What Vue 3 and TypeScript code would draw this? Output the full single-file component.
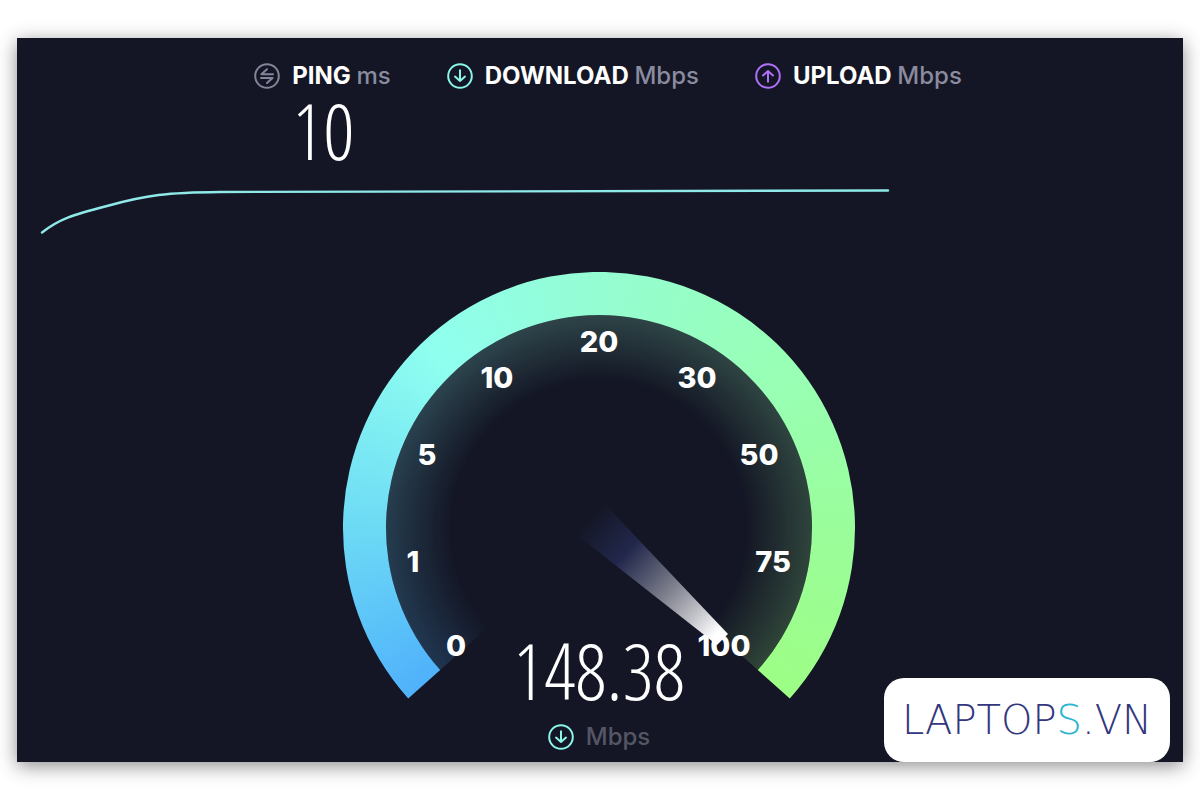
<script setup lang="ts">
interface Metric {
  id: 'ping' | 'download' | 'upload'
  label: string
  unit: string
  value: string
}

interface Tick {
  label: string
  x: number
  y: number
}

const metrics: Metric[] = [
  { id: 'ping', label: 'PING', unit: 'ms', value: '10' },
  { id: 'download', label: 'DOWNLOAD', unit: 'Mbps', value: '' },
  { id: 'upload', label: 'UPLOAD', unit: 'Mbps', value: '' },
]

const ticks: Tick[] = [
  { label: '0', x: 113, y: 384 },
  { label: '1', x: 70, y: 300 },
  { label: '5', x: 84, y: 193 },
  { label: '10', x: 154, y: 116 },
  { label: '20', x: 256, y: 80 },
  { label: '30', x: 354, y: 116 },
  { label: '50', x: 416, y: 193 },
  { label: '75', x: 430, y: 300 },
  { label: '100', x: 381, y: 384 },
]
</script>

<template>
  <main class="panel">
    <header class="metrics">
      <section v-for="m in metrics" :key="m.id" class="metric" :class="m.id">
        <svg class="icon" viewBox="0 0 26 26" aria-hidden="true">
          <circle cx="13" cy="13" r="11.8" />
          <path v-if="m.id === 'ping'" d="M19 11.3H7.4L13 6.2M7 14.9H18.6L13 20" />
          <path v-else-if="m.id === 'download'" d="M13 7.2V18M8 13.6L13 18L18 13.6" />
          <path v-else d="M13 18.8V8M8 12.4L13 8L18 12.4" />
        </svg>
        <h2 class="label">{{ m.label }} <span class="unit">{{ m.unit }}</span></h2>
        <p v-if="m.value" class="value">{{ m.value }}</p>
      </section>
    </header>

    <svg class="graph" viewBox="0 0 1166 80" aria-hidden="true">
      <path d="M25 62.5C42 49 55 45 90 36C130 25 150 22.5 203 22C380 21 600 21.5 871 20.5" />
    </svg>

    <section class="gauge">
      <svg class="dial" viewBox="0 0 512 490" role="img" aria-label="Download speed gauge">
        <defs>
          <clipPath id="band">
            <path d="M65.2 426.6A256 256 0 1 1 446.8 426.6L414.8 398A213 213 0 1 0 97.2 398Z" />
          </clipPath>
          <clipPath id="sector">
            <path d="M97.2 398A213 213 0 1 1 414.8 398L256 256Z" />
          </clipPath>
          <linearGradient id="beam" gradientUnits="userSpaceOnUse" x1="246" y1="246" x2="380" y2="368">
            <stop offset="0" stop-color="#252c55" stop-opacity="0" />
            <stop offset="0.28" stop-color="#252c55" stop-opacity="0.8" />
            <stop offset="0.58" stop-color="#8a8c99" stop-opacity="0.85" />
            <stop offset="0.95" stop-color="#ffffff" />
          </linearGradient>
        </defs>
        <g clip-path="url(#sector)">
          <foreignObject width="512" height="512"><div class="sweep glow"></div></foreignObject>
        </g>
        <g clip-path="url(#band)">
          <foreignObject width="512" height="512"><div class="sweep"></div></foreignObject>
        </g>
        <text v-for="t in ticks" :key="t.label" class="tick" :x="t.x" :y="t.y">{{ t.label }}</text>
        <path fill="url(#beam)" d="M256 226L385 362L374 373L225 256Z" />
      </svg>

      <div class="reading">
        <p class="value speed">148.38</p>
        <p class="caption">
          <svg class="icon" viewBox="0 0 26 26" aria-hidden="true">
            <circle cx="13" cy="13" r="11.8" />
            <path d="M13 7.2V18M8 13.6L13 18L18 13.6" />
          </svg>
          <span>Mbps</span>
        </p>
      </div>
    </section>

    <aside class="brand">LAPTOP<span class="accent">S</span>.VN</aside>
  </main>
</template>

<style>
body {
  margin: 0;
  background: #fff;
}
</style>

<style scoped>
.panel {
  position: relative;
  display: flow-root;
  margin: 38px 17px;
  background: #141625;
  box-shadow: 0 4px 18px rgba(0, 0, 0, 0.45);
  color: #fff;
  font-family: Inter, "Liberation Sans", sans-serif;
}

.metrics {
  display: flex;
  justify-content: center;
  align-items: flex-start;
  gap: 56px;
  min-height: 108px;
  padding: 24px 0 0 16px;
}

.metric {
  display: grid;
  grid-template-columns: 26px auto;
  column-gap: 12px;
  align-items: center;
}

.icon {
  width: 26px;
  height: 26px;
  fill: none;
  stroke: currentColor;
  stroke-width: 2;
  stroke-linecap: round;
  stroke-linejoin: round;
}

.ping {
  color: #84859a;
}

.download,
.caption {
  color: #8af5e8;
}

.upload {
  color: #b070fa;
}

.label {
  margin: 0;
  color: #fff;
  font-size: 24px;
  font-weight: 650;
  line-height: 28px;
  white-space: nowrap;
}

.unit {
  color: #8a8b9e;
  font-weight: 550;
}

.value {
  grid-column: 2;
  margin: 0;
  color: #fff;
  font-family: "Open Sans Condensed Light", "Open Sans Condensed", "Open Sans", sans-serif;
  font-size: 78px;
  font-weight: 300;
  line-height: 80px;
}

.graph {
  display: block;
  width: 100%;
  fill: none;
  stroke: #8ee9e8;
  stroke-width: 2.4;
  stroke-linecap: round;
}

.gauge {
  display: grid;
  justify-content: center;
  margin: 22px 2px 0 0;
}

.dial,
.reading {
  grid-area: 1 / 1;
}

.dial {
  display: block;
  width: 512px;
  max-width: 100%;
}

.sweep {
  width: 512px;
  height: 512px;
  background: conic-gradient(
    from 228deg,
    #4fb1fb 0deg,
    #6ddaf5 42deg,
    #8ffff0 88deg,
    #95fdd2 132deg,
    #98ffb8 177deg,
    #9afd9b 222deg,
    #9dfe85 264deg,
    #9dfe85 312deg,
    #4fb1fb 312deg
  );
}

.glow {
  opacity: 0.2;
  mask-image: radial-gradient(circle closest-side, transparent 57%, rgba(0, 0, 0, 0.5) 70%, #000 83%);
}

.tick {
  fill: #fff;
  font-size: 29px;
  font-weight: 800;
  text-anchor: middle;
}

.reading {
  align-self: end;
  justify-self: center;
  padding-bottom: 11px;
  text-align: center;
}

.caption {
  display: flex;
  align-items: center;
  justify-content: center;
  gap: 12px;
  margin: 13px 0 0;
  font-size: 24px;
  font-weight: 550;
  line-height: 28px;
}

.caption span {
  color: #555665;
}

.brand {
  position: absolute;
  right: 13px;
  bottom: 0;
  padding: 20px 18px;
  border-radius: 20px;
  background: #fff;
  color: #33367c;
  font-family: "DejaVu Sans Light", "DejaVu Sans", sans-serif;
  font-size: 40px;
  font-weight: 200;
  line-height: 44px;
}

.accent {
  color: #2bb5d3;
}
</style>
